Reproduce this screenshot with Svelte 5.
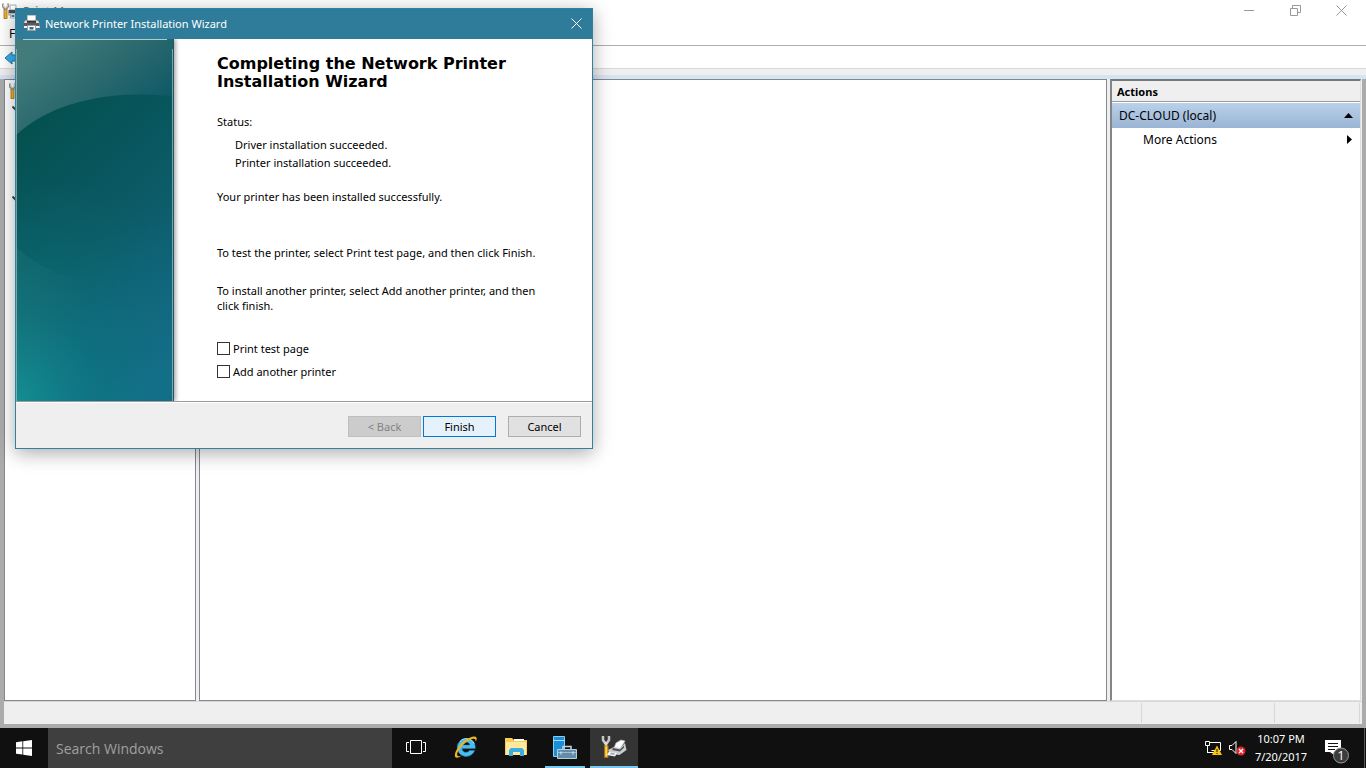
<script>
  let printTest = $state(false);
  let addAnother = $state(false);
  let search = $state('');
</script>

{#snippet toolPrinter()}
  <rect x="2" y="6.500" width="3" height="9" fill="#f0b323" stroke="#a3701a" stroke-width=".8" />
  <path d="M1 .5v3l1.500 2h2l1.500-2v-3M3.500 5v2" fill="none" stroke="#8f8d85" stroke-width="2.200" />
  <path d="M1.300 1v2.300l1.500 1.700h1.400l1.500-1.700V1" fill="none" stroke="#e4e2da" stroke-width=".8" />
  <path d="M8 2h6v5H8z" fill="#fff" stroke="#999" stroke-width=".8" />
  <path d="M6.500 7h9v5h-9z" fill="#4a4a4c" />
  <path d="M6.500 10h9v3h-9z" fill="#c9cbcd" />
  <path d="M8.500 11h5v4h-5z" fill="#fff" stroke="#888" stroke-width=".6" />
  <path d="M9.500 12h3v2h-3z" fill="#3487b5" />
{/snippet}

<div class="desktop">
  <section class="console" aria-label="Print Management">
    <header class="titlebar">
      <svg class="appicon" viewBox="0 0 16 16">{@render toolPrinter()}</svg>
      <span class="apptitle">Print M</span>
      <div class="winbuttons">
        <button aria-label="Minimize"><svg viewBox="0 0 11 11"><path d="M0 5.5h10" /></svg></button>
        <button aria-label="Restore"><svg viewBox="0 0 11 11"><path d="M.5 3.5h7v7h-7zM2.5 3.5v-3h8v7h-3" /></svg></button>
        <button aria-label="Close window"><svg viewBox="0 0 11 11"><path d="M.5.5l10 10M10.500.5l-10 10" /></svg></button>
      </div>
    </header>
    <nav class="menu"><span>File</span></nav>
    <div class="toolbar">
      <svg class="back" viewBox="0 0 16 14"><path d="M1 7l7-6v3h7v6H8v3z" fill="#36b0ee" stroke="#2478a5" /></svg>
    </div>
    <div class="strip"></div>
    <div class="panes">
      <aside class="tree">
        <svg class="appicon" viewBox="0 0 16 16">{@render toolPrinter()}</svg>
        <svg class="twisty" viewBox="0 0 9 6"><path d="M.5.5l4 4 4-4" /></svg>
        <svg class="twisty lower" viewBox="0 0 9 6"><path d="M.5.5l4 4 4-4" /></svg>
      </aside>
      <main class="content"></main>
      <aside class="actions">
        <h2>Actions</h2>
        <button class="node">DC-CLOUD (local)
          <svg viewBox="0 0 9 5"><path d="M0 5l4.5-5L9 5z" /></svg>
        </button>
        <button class="more">More Actions
          <svg viewBox="0 0 5 9"><path d="M0 0l5 4.5L0 9z" /></svg>
        </button>
      </aside>
    </div>
    <footer class="status"><span></span><span></span><span></span></footer>
  </section>

  <footer class="taskbar">
    <button class="start" aria-label="Start">
      <svg viewBox="0 0 16 16"><path d="M0 2.2l6.4-.9v6.2H0zM7.2 1.2L16 0v7.5H7.2zM0 8.4h6.4v6.2L0 13.8zM7.2 8.4H16V16l-8.8-1.2z" fill="#fff" /></svg>
    </button>
    <input class="search" type="text" placeholder="Search Windows" aria-label="Search Windows" bind:value={search} />
    <button class="app" aria-label="Task View">
      <svg width="20" height="16" viewBox="0 0 20 16"><path d="M4.500 1.500h11v13h-11zM3 3.500H.5v9H3M17 3.500h2.500v9H17" fill="none" stroke="#fff" /></svg>
    </button>
    <button class="app" aria-label="Internet Explorer">
      <svg width="24" height="24" viewBox="0 0 24 24">
        <path d="M12 3.500a9 9 0 1 0 8.700 12h-5.200c-.8 1.200-1.900 1.800-3.400 1.800-2.400 0-4-1.500-4.200-3.900h13.400C21.700 7.500 17.700 3.500 12 3.500zM8 10.100c.5-1.900 1.900-3 4-3s3.500 1.100 3.900 3z" fill="#48bdf0" stroke="#2288c4" stroke-width=".5" />
        <path d="M6 6.500c1.700-2 4-2.900 6.200-2.900 3.900 0 6.700 2.200 7.900 5" fill="none" stroke="#a9e8ff" />
        <path d="M7.500 21.100C4.300 23.100 1.800 23.300 1.100 21.700-.1 18.900 3.500 11.300 10.200 6.100 15.600 1.900 21.200.5 22.400 2.500c.6 1.100.2 2.500-.8 4.200.2-1.500 0-2.500-1-2.800-2.100-.7-6.300 1.500-9.900 4.600-5.400 4.700-8.200 10-7.500 11.700.4 1 2 1.300 4.300.9z" fill="#f4b51b" />
      </svg>
    </button>
    <button class="app" aria-label="File Explorer">
      <svg width="24" height="24" viewBox="0 0 24 24">
        <path d="M1 3h7l2 2h13v15H1z" fill="#f6cc55" /><path d="M2 7h20v13H2z" fill="#ffe79c" /><path d="M10 4h10v2H10z" fill="#fff" />
        <path d="M5 21v-6l2-2h11l2 2v6h-4v-4H9v4z" fill="#38aee3" />
      </svg>
    </button>
    <button class="app running" aria-label="Server Manager">
      <svg width="26" height="26" viewBox="0 0 26 26">
        <path d="M1.500 2.500h11v20h-11z" fill="#188fd8" stroke="#8acdf5" /><path d="M1 6.500h12" stroke="#a8dcf8" />
        <path d="M5.500 15.500h19v9h-19z" fill="#628daa" stroke="#b7ced9" /><path d="M11 15v-2.500h8V15" fill="none" stroke="#c3d5df" stroke-width="1.500" />
        <path d="M6 18.500h18" stroke="#a4bdcc" /><path d="M9 17.500v3M21 17.500v3" stroke="#e1edf3" />
      </svg>
    </button>
    <button class="app running active" aria-label="Print Management">
      <svg width="26" height="26" viewBox="0 0 26 26">
        <path d="M3.500 11.500H7v12H3.500z" fill="#efaf22" stroke="#a37312" /><path d="M5.300 13v9" stroke="#ffe287" />
        <path d="M2 2v4l2 3h2l2-3V2" fill="none" stroke="#c5c5c5" stroke-width="2.500" /><path d="M5 8v3.500" stroke="#ddd" stroke-width="2.500" />
        <path d="M15 9l5-3 4 1-5 8-6-1z" fill="#fff" stroke="#bbb" stroke-width=".7" />
        <path d="M7 16l6-3 6 1 5-5 1.500 7-7 5-9-1z" fill="#c8cbcf" />
        <path d="M12 14l7 1.500 4-4v2l-4 4-8-1.500z" fill="#4e5357" />
        <path d="M8 17.500l8 1.500-2 3.500-8-1.500z" fill="#f5f5f5" /><path d="M10 18.500l4 .8-1 1.700-4-.8z" fill="#9aafb9" />
      </svg>
    </button>
    <div class="tray">
      <svg width="17" height="16" viewBox="0 0 17 16">
        <path d="M5 2.500h10.500v8h-9M.5 1.500h4v4h-4zM2.500 5.500v7M2 12.500h7" fill="none" stroke="#fff" />
        <path d="M12 5.500l5 9.500H7z" fill="#ffc400" /><path d="M12 9v3M12 13v1" stroke="#111" />
      </svg>
      <svg width="17" height="16" viewBox="0 0 17 16">
        <path d="M.5 5.500H3l4-4v12l-4-4H.5z" fill="none" stroke="#fff" />
        <circle cx="12" cy="11" r="4.500" fill="#df2430" /><path d="M10 9l4 4M14 9l-4 4" stroke="#fff" stroke-width="1.300" />
      </svg>
    </div>
    <div class="clock"><time>10:07 PM</time><time>7/20/2017</time></div>
    <button class="notice" aria-label="Notifications">
      <svg width="26" height="26" viewBox="0 0 26 26">
        <path d="M1 1h16v12h-7v3l-4-3H1z" fill="#fff" /><path d="M4 4.500h10M4 7.500h10M4 10.500h7" stroke="#111" />
        <circle cx="17" cy="16.500" r="7.500" fill="#3c3c3c" stroke="#999" />
        <text x="17" y="21" text-anchor="middle">1</text>
      </svg>
    </button>
    <div class="peek"></div>
  </footer>

  <form class="dialog" aria-label="Network Printer Installation Wizard" onsubmit={(e) => e.preventDefault()}>
    <header>
      <svg class="printer" viewBox="0 0 16 16">
        <path d="M3.500.5h8V6h-8z" fill="#fff" stroke="#c4c4c4" />
        <path d="M1 5.500h2v2h9v-2h2l1.500 3V13H0V8z" fill="#dcdcdc" />
        <path d="M3 5.500h9v2.500H3zM0 8h15.500v3.500H0z" fill="#5b5b5d" /><path d="M3 6h9v1.500H3z" fill="#373739" />
        <path d="M0 11h3v2H0zM12 11h3.500v2H12z" fill="#f4f4f4" />
        <path d="M3.500 10.500h8v5h-8z" fill="#fff" stroke="#9c9c9c" /><path d="M5.500 12h4v2.500h-4z" fill="#2b6d8c" />
      </svg>
      <span>Network Printer Installation Wizard</span>
      <button type="button" aria-label="Close"><svg viewBox="0 0 11 11"><path d="M.5.5l10 10M10.500.5l-10 10" /></svg></button>
    </header>
    <div class="wizard">
      <svg class="banner" viewBox="0 0 158 362" preserveAspectRatio="none">
        <defs>
          <linearGradient id="upper" gradientUnits="userSpaceOnUse" x1="40" y1="0" x2="110" y2="90"><stop stop-color="#427b7a" /><stop offset=".5" stop-color="#2b696e" /><stop offset="1" stop-color="#0f5a67" /></linearGradient>
          <linearGradient id="lower" x1=".2" y1="0" x2=".7" y2="1"><stop stop-color="#04504f" /><stop offset=".5" stop-color="#0b5a65" /><stop offset="1" stop-color="#166b8c" /></linearGradient>
          <radialGradient id="glow" gradientUnits="userSpaceOnUse" cx="0" cy="362" r="230"><stop stop-color="#0d898f" /><stop offset=".4" stop-color="#0c7a82" stop-opacity=".5" /><stop offset="1" stop-color="#0d7078" stop-opacity="0" /></radialGradient>
          <linearGradient id="sheen"><stop stop-color="#5bb6ad" stop-opacity=".09" /><stop offset="1" stop-color="#5bb6ad" stop-opacity="0" /></linearGradient>
        </defs>
        <path d="M0 0h158v362H0z" fill="url(#upper)" />
        <path d="M0 96C37 62 94 51 158 57v305H0z" fill="url(#lower)" />
        <path d="M0 130h158v232H0z" fill="url(#glow)" />
        <path d="M0 208c26 23 45 28 70 34v120H0z" fill="url(#sheen)" />
        <path d="M.5 10v352M156.500 10v352" stroke="#a4c1c5" stroke-opacity=".7" /><path d="M157.500 0v362" stroke="#205767" /><path d="M7 .5h144" stroke="#afcccc" />
      </svg>
      <div class="copy">
        <h1>Completing the Network Printer Installation Wizard</h1>
        <p class="label">Status:</p>
        <ul><li>Driver installation succeeded.</li><li>Printer installation succeeded.</li></ul>
        <p class="result">Your printer has been installed successfully.</p>
        <p class="hint">To test the printer, select Print test page, and then click Finish.</p>
        <p class="another">To install another printer, select Add another printer, and then click finish.</p>
        <label><input type="checkbox" bind:checked={printTest} />Print test page</label>
        <label><input type="checkbox" bind:checked={addAnother} />Add another printer</label>
      </div>
    </div>
    <footer>
      <button type="button" disabled>&lt; Back</button>
      <button type="submit" class="primary">Finish</button>
      <button type="button" class="cancel">Cancel</button>
    </footer>
  </form>
</div>

<style>
  :global(body) { margin: 0; }
  * { box-sizing: border-box; }
  .desktop { position: relative; display: flex; flex-direction: column; min-height: 100vh; overflow: hidden; background: #ababab; color: #000; font: 12px/15px "Noto Sans", "Open Sans", sans-serif; }
  button { padding: 0; border: 0; background: none; font: inherit; color: inherit; }
  svg { flex: none; }
  h1, h2, p, ul { margin: 0; padding: 0; }

  .console { flex: 1; display: flex; flex-direction: column; }
  .titlebar { display: flex; height: 24px; padding: 0 2px; background: #fff; color: #777; }
  .appicon { display: block; width: 16px; height: 16px; margin-top: 3px; }
  .apptitle { margin: 4px 0 0 5px; line-height: 16px; }
  .winbuttons { display: flex; margin-left: auto; }
  .winbuttons button { width: 46px; height: 20px; display: grid; place-items: center; }
  .winbuttons svg { width: 11px; height: 11px; fill: none; stroke: #999; }
  .menu { height: 22px; padding: 2px 9px; background: #fff; border-bottom: 1px solid #aeaeb2; }
  .toolbar { height: 23px; padding: 5px 4px; background: #fff; border-bottom: 1px solid #d9d9d9; }
  .back { width: 16px; height: 14px; display: block; }
  .strip { height: 10px; background: linear-gradient(#efefef 6px, #d5e4f2 6px); }
  .panes { flex: 1; display: flex; margin: 0 4px; padding-right: 1px; gap: 3px; background: #efefef; }
  .tree { width: 192px; padding: 0 4px; background: #fff; border: 1px solid #828790; }
  .twisty { display: block; width: 9px; height: 6px; margin: 7px 0 0 3px; fill: none; stroke: #444; stroke-width: 2; }
  .twisty.lower { margin-top: 84px; }
  .content { flex: 1; background: #fff; border: 1px solid #828790; }
  .actions { width: 251px; background: #fff; border: 1px solid #dfdfdf; border-top: 2px solid #777; border-left: 2px solid #858585; }
  .actions h2 { height: 21px; padding-left: 5px; font: bold 11px/21px "Noto Sans", sans-serif; background: #efefef; border-bottom: 1px solid #999; }
  .actions button { display: flex; width: 100%; align-items: center; justify-content: space-between; text-align: left; }
  .node { height: 25px; margin-top: 1px; padding: 0 7px; background: linear-gradient(#bad1ea, #99b4d4); }
  .node svg { width: 9px; height: 5px; }
  .more { height: 23px; padding: 0 8px 0 31px; }
  .more svg { width: 5px; height: 9px; }
  .status { display: flex; height: 23px; margin: 0 4px 4px; padding: 1px 2px 1px 0; background: #efefef; border-top: 1px solid #d7d7d7; }
  .status span { width: 133px; border-right: 1px solid #d7d7d7; }
  .status span:first-child { flex: 1; }
  .status span:last-child { width: 85px; }

  .taskbar { display: flex; height: 40px; background: #101010; color: #fff; }
  .start { width: 48px; display: grid; place-items: center; }
  .start svg { width: 16px; height: 16px; }
  .search { width: 344px; padding: 0 8px; border: 0; border-radius: 0; outline: 0; background: #3f3f3f; color: #fff; font: 14px "Open Sans", sans-serif; }
  .search::placeholder { color: #a0a0a0; opacity: 1; }
  .app { width: 48px; display: grid; place-items: center; margin-right: 2px; border-bottom: 2px solid transparent; }
  .running { width: 40px; margin: 0 5px 0 3px; border-color: #76c9ee; }
  .active { width: 48px; margin: 0; background: #343434; }
  .tray { display: flex; align-items: center; gap: 7px; margin-left: auto; }
  .clock { display: flex; flex-direction: column; width: 70px; padding-top: 2px; font-size: 11px; line-height: 18px; text-align: center; }
  .notice { width: 26px; margin: 8px 14px 0 8px; display: grid; place-items: center; }
  .notice text { fill: #fff; font: 13px "Open Sans", sans-serif; }
  .peek { width: 2px; border-left: 1px solid #555; }

  .dialog { position: absolute; left: 15px; top: 8px; width: 578px; background: #efefef; border: 1px solid #2e819f; box-shadow: 0 4px 18px #0005; font-size: 11px; }
  .dialog header { display: flex; height: 30px; align-items: center; padding: 0 0 2px 8px; gap: 5px; background: #2e7c99; color: #fff; }
  .printer { width: 16px; height: 16px; }
  .dialog header button { width: 31px; height: 28px; margin-left: auto; display: grid; place-items: center; }
  .dialog header button svg { width: 11px; height: 11px; stroke: #fff; }
  .wizard { display: flex; min-height: 363px; background: #fff; border-bottom: 1px solid #9b9b9b; }
  .banner { width: 158px; height: 362px; box-shadow: 2px 0 4px #0005; clip-path: inset(0 -6px 0 0); }
  .copy { flex: 1; padding: 16px 40px 0 43px; }
  h1 { font: bold 16px/18px "DejaVu Sans", sans-serif; }
  .label { margin-top: 23px; }
  ul { margin-top: 7px; padding-left: 18px; list-style: none; line-height: 18px; }
  .result { margin-top: 17px; }
  .hint { margin-top: 41px; }
  .another { margin-top: 23px; }
  label { display: flex; height: 23px; align-items: center; gap: 3px; }
  .another + label { margin-top: 24px; }
  label input { appearance: none; width: 13px; height: 13px; margin: 0; border: 1px solid #333; background: #fff; }
  label input:checked { background: #333; box-shadow: inset 0 0 0 2px #fff; }
  .dialog footer { display: flex; justify-content: flex-end; height: 46px; padding: 13px 11px 0 0; gap: 2px; border-top: 1px solid #fff; }
  .dialog footer button { width: 73px; height: 21px; border: 1px solid #adadad; background: #e1e1e1; }
  .dialog footer button:disabled { border-color: #bfbfbf; background: #ccc; color: #838383; }
  .dialog footer .primary { border: 1px solid #0078d7; background: #e5f1fb; }
  .dialog footer .cancel { margin-left: 10px; }
</style>
